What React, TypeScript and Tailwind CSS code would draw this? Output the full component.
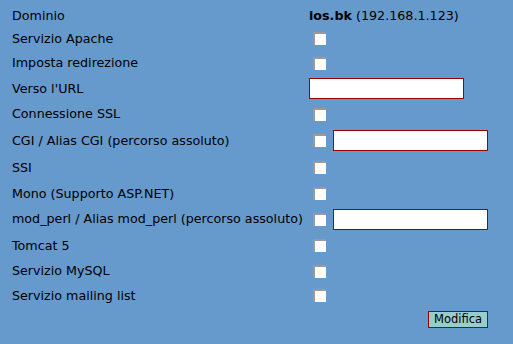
import React from 'react';

type Row = {
  label: string;
  h: string;
  kind: 'domain' | 'check' | 'input' | 'checkInput';
};

const rows: Row[] = [
  { label: 'Dominio', h: 'h-[23px]', kind: 'domain' },
  { label: 'Servizio Apache', h: 'h-[23px]', kind: 'check' },
  { label: 'Imposta redirezione', h: 'h-[26px]', kind: 'check' },
  { label: "Verso l'URL", h: 'h-[25px]', kind: 'input' },
  { label: 'Connessione SSL', h: 'h-[26px]', kind: 'check' },
  { label: 'CGI / Alias CGI (percorso assoluto)', h: 'h-[27px]', kind: 'checkInput' },
  { label: 'SSI', h: 'h-[27px]', kind: 'check' },
  { label: 'Mono (Supporto ASP.NET)', h: 'h-[25px]', kind: 'check' },
  { label: 'mod_perl / Alias mod_perl (percorso assoluto)', h: 'h-[26px]', kind: 'checkInput' },
  { label: 'Tomcat 5', h: 'h-[27px]', kind: 'check' },
  { label: 'Servizio MySQL', h: 'h-[24px]', kind: 'check' },
  { label: 'Servizio mailing list', h: 'h-[25px]', kind: 'check' },
];

const Checkbox = () => (
  <div className="ml-[4px] h-[13px] w-[13px] shrink-0 border-t-2 border-l-2 border-[#9a9a9a] bg-white" />
);

const TextBox = ({ className = '' }: { className?: string }) => (
  <div className={`h-[21px] w-[155px] border border-[#990000] bg-white ${className}`} />
);

export default function App() {
  return (
    <div
      className="h-[344px] w-[513px] bg-[#6699cc] pt-[4px] pl-[12px] text-[12.7px] text-black"
      style={{ fontFamily: '"DejaVu Sans", Verdana, sans-serif' }}
    >
      {rows.map((r) => (
        <div key={r.label} className={`flex items-center ${r.h}`}>
          <div className="w-[297px] shrink-0 whitespace-nowrap">{r.label}</div>
          <div className="flex items-center">
            {r.kind === 'domain' && (
              <span className="whitespace-nowrap">
                <b>ios.bk</b> (192.168.1.123)
              </span>
            )}
            {r.kind === 'check' && <Checkbox />}
            {r.kind === 'input' && <TextBox />}
            {r.kind === 'checkInput' && (
              <>
                <Checkbox />
                <TextBox className="ml-[7px]" />
              </>
            )}
          </div>
        </div>
      ))}
      <div className="flex h-[23px] w-[476px] items-center justify-end">
        <button className="h-[17px] w-[60px] border border-[#990000] bg-[#99cccc] text-[11.5px] leading-none text-black">
          Modifica
        </button>
      </div>
    </div>
  );
}
